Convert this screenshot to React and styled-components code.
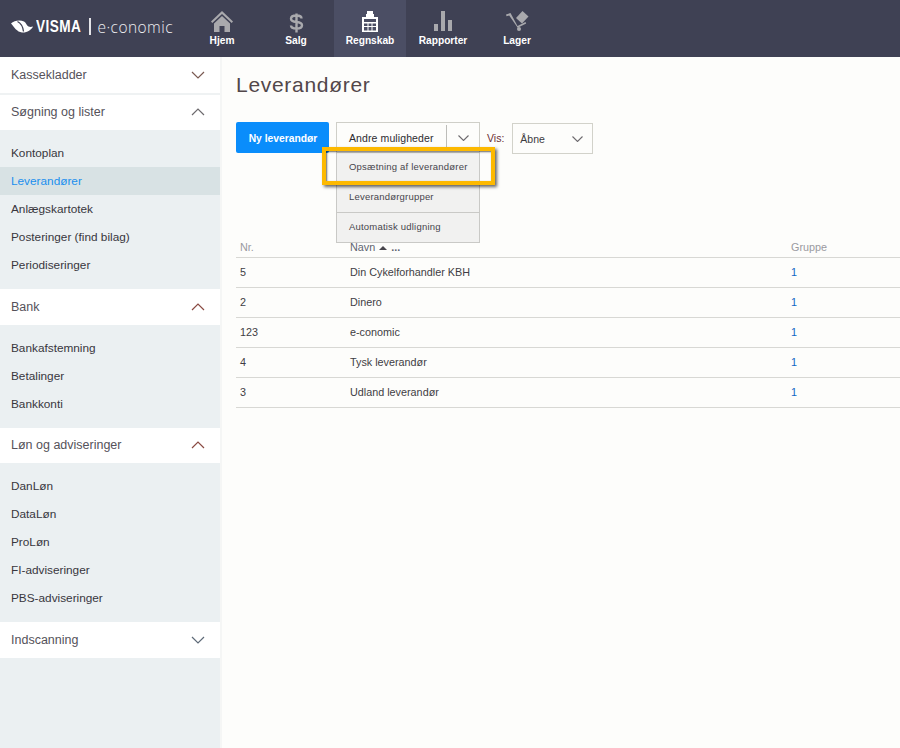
import React from "react";
import styled, { createGlobalStyle } from "styled-components";

const Global = createGlobalStyle`
  html, body { margin: 0; padding: 0; background: #fdfdfb; }
  body { font-family: "Liberation Sans", Arial, sans-serif; }
`;
const Page = styled.div`width: 900px; height: 748px; overflow: hidden; display: flex; flex-direction: column;`;
const Header = styled.header`height: 57px; flex: none; background: #3f4154; display: flex;`;
const Logo = styled.div`width: 186px; flex: none; display: flex; align-items: center; color: #fff; padding: 0 0 4px 11px; box-sizing: border-box;`;
const LogoMark = styled.span`
  display: block; width: 45px; flex: none; margin-left: 3px; white-space: nowrap;
  font-weight: 700; font-size: 16px; letter-spacing: .5px; line-height: 20px; transform: scaleX(.85); transform-origin: left;
`;
const LogoSwoosh = styled.svg`width: 22px; height: 13px; flex: none; display: block; fill: #fff;`;
const LogoBar = styled.span`width: 1.5px; height: 17px; background: #e4e4e8; margin: 0 7px 0 8px; flex: none;`;
const LogoText = styled.span`font-family: "Open Sans", sans-serif; font-size: 15.5px; font-weight: 300; letter-spacing: .45px; color: #f0f0f2; white-space: nowrap;`;
const Nav = styled.nav`display: flex;`;
const NavItem = styled.div`
  width: ${p => p.$w}px; display: flex; flex-direction: column; align-items: center;
  background: ${p => (p.$active ? "#4b4e64" : "transparent")};
  color: #fff; font-size: 10.2px; font-weight: 700; padding-top: 9px; box-sizing: border-box;
`;
const NavIcon = styled.svg`width: 24px; height: 24px; display: block; margin-bottom: 2px; flex: none;`;
const Body = styled.div`flex: 1; display: flex; min-height: 0;`;
const Sidebar = styled.aside`width: 220px; flex: none; background: #ebf0f2; border-right: 2px solid #f5f6f5;`;
const Section = styled.div`
  height: ${p => p.$h}px; background: #fff; display: flex; align-items: center; justify-content: space-between;
  padding: 0 15px ${p => p.$pb || 0}px 11px; font-size: 12.5px; color: #55525a; box-sizing: border-box;
  border-bottom: ${p => (p.$sep ? "2px solid #eff2f3" : "none")};
`;
const Chevron = styled.svg`width: 14px; height: 8px; display: block; flex: none; fill: none; stroke: ${p => p.$c || "#6d6a6e"}; stroke-width: 1.2;`;
const List = styled.ul`list-style: none; margin: 0; padding: 9px 0 10px;`;
const Item = styled.li`
  height: 28px; line-height: 28px; padding-left: 11px; font-size: 11.8px;
  color: ${p => (p.$active ? "#1a8fee" : "#38363d")};
  background: ${p => (p.$active ? "#d8e2e4" : "transparent")};
`;
const Main = styled.main`flex: 1; padding: 0 0 0 14px; min-width: 0;`;
const Title = styled.h1`margin: 15px 0 0 0; font-weight: 400; font-size: 21px; line-height: 26px; letter-spacing: .7px; color: #52474a;`;
const Toolbar = styled.div`display: flex; align-items: flex-start; margin-top: 24px; position: relative;`;
const Primary = styled.button`
  width: 93px; height: 31px; border: 0; border-radius: 2px; background: #0a8dfb; color: #fff; padding: 1px 0 0 1px;
  font: 700 10.3px "Liberation Sans", sans-serif; margin-right: 7px;
`;
const Split = styled.div`
  width: 144px; height: 31px; box-sizing: border-box; border: 1px solid #cfcfc8; background: #fdfdfb;
  display: flex; align-items: center; font-size: 10.5px; color: #2c2b30;
`;
const SplitLabel = styled.span`width: 110px; flex: none; box-sizing: border-box; padding: 1px 0 0 12px; border-right: 1px solid #bdbdb9; line-height: 25px; letter-spacing: .1px;`;
const SplitArrow = styled.span`flex: 1; display: flex; justify-content: center; padding-top: 1px;`;
const VisLabel = styled.span`font-size: 10.5px; color: #6c2f36; margin: 10px 8px 0 7px;`;
const Select = styled.div`
  width: 81px; height: 31px; margin-top: 1px; box-sizing: border-box; border: 1px solid #d2d2ca; display: flex;
  align-items: center; justify-content: space-between; padding: 0 9px 0 7px; font-size: 10.5px; color: #3c3b40;
`;
const Menu = styled.div`
  position: absolute; left: 100px; top: 31px; width: 144px; box-sizing: border-box; z-index: 2;
  background: #f1f1f0; border: 1px solid #c9c9c6; border-top: 0;
`;
const MenuItem = styled.div`
  height: ${p => (p.$last ? 29 : 30)}px; line-height: 28px; box-sizing: border-box; padding-left: 12px; font-size: 9.5px; color: #47454c; letter-spacing: .2px;
  border-bottom: ${p => (p.$last ? "none" : "1px solid #c9c9c6")};
`;
const Highlight = styled.div`
  position: absolute; left: 86px; top: 25px; width: 173px; height: 38px; box-sizing: border-box; z-index: 3;
  border: 4px solid #fdb900; box-shadow: 2px 2px 3px rgba(0,0,0,.6), inset 1px 1px 2px rgba(0,0,0,.6);
`;
const Table = styled.div`margin-top: 83px; font-size: 10.8px;`;
const Row = styled.div`
  display: grid; grid-template-columns: 110px 441px 1fr; height: ${p => (p.$head ? 21 : 30)}px; box-sizing: border-box;
  align-items: center; padding: 0 0 ${p => (p.$head ? 0 : 2)}px 4px; border-bottom: 1px solid #d8d8d4; color: #3f3d44;
`;
const HeadCell = styled.span`color: ${p => (p.$dark ? "#5e6470" : "#9a9a9f")};`;
const Group = styled.span`color: #1166c4;`;
const Dots = styled.b`font-weight: 700;`;
const SortUp = styled.span`
  display: inline-block; width: 0; height: 0; margin: 0 4px 1px 4px; vertical-align: middle;
  border-left: 4px solid transparent; border-right: 4px solid transparent; border-bottom: 4px solid #47454c;
`;

const Down = ({ c }) => <Chevron $c={c} viewBox="0 0 14 8"><path d="M1 1l6 6 6-6" /></Chevron>;
const Up = ({ c }) => <Chevron $c={c} viewBox="0 0 14 8"><path d="M1 7l6-6 6 6" /></Chevron>;
const Small = styled.svg`width: 11px; height: 6px; fill: none; stroke: #6d6a6e; stroke-width: 1.1; display: block;`;
const SmallDown = () => <Small viewBox="0 0 11 6"><path d="M.5.5l5 5 5-5" /></Small>;

const rows = [["5", "Din Cykelforhandler KBH"], ["2", "Dinero"], ["123", "e-conomic"], ["4", "Tysk leverandør"], ["3", "Udland leverandør"]];

export default function App() {
  return (
    <Page>
      <Global />
      <Header>
        <Logo>
          <LogoSwoosh viewBox="0 0 22 13">
            <path d="M0 3.500C3 .5 9-.5 13 1.500c2 1 2.500 4 4.500 5 1.500.7 3 .5 4.500 0-1.500 3.500-6.500 6.500-11 6C6 12 3 7 0 3.500z" />
            <path d="M6.500 1.500c3 1.500 5.500 5.500 6 10" stroke="#3f4154" strokeWidth="1.3" fill="none" />
          </LogoSwoosh>
          <LogoMark>VISMA</LogoMark><LogoBar /><LogoText>e·conomic</LogoText>
        </Logo>
        <Nav>
          <NavItem $w="72">
            <NavIcon viewBox="0 0 24 24" fill="#a9a9ad">
              <path d="M12 2 1 12.500l1.300 1.500L12 5l9.700 9 1.300-1.500z" />
              <path d="M4 14.500 12 7l8 7.500V23h-5.500v-6h-5v6H4z" />
            </NavIcon>Hjem
          </NavItem>
          <NavItem $w="76">
            <NavIcon viewBox="0 0 24 24" fill="none" stroke="#a9a9ad" strokeWidth="2.4">
              <path d="M17.500 9.500c0-2-2-3-5-3s-5.500 1-5.500 3.200 2.500 2.900 5.500 3.300 5.500 1 5.500 3.200-2.500 3.300-5.500 3.300-5.500-1-5.500-3M12.500 4.500v19" />
            </NavIcon>Salg
          </NavItem>
          <NavItem $w="72" $active>
            <NavIcon viewBox="0 0 24 24" fill="#fff">
              <path d="M9 2h6v3h1v3h4v15H4V8h4V5h1z" />
              <path d="M6 10h12v3H6zM6 14.500h3.500v2.500H6zM10.500 14.500h3v2.500h-3zM14.500 14.500H18v2.500h-3.500zM6 18h3.500v3.500H6zM10.500 18h3v3.500h-3zM14.500 18H18v3.500h-3.500z" fill="#4b4e64" />
            </NavIcon>Regnskab
          </NavItem>
          <NavItem $w="74">
            <NavIcon viewBox="0 0 24 24" fill="#a9a9ad"><path d="M3 15h4v7H3zM10 2h4v20h-4zM17 11h4v11h-4z" /></NavIcon>Rapporter
          </NavItem>
          <NavItem $w="74">
            <NavIcon viewBox="0 0 24 24" fill="#a9a9ad">
              <path d="m17.500 2 6 5.500-6.500 7-6-5.500z" />
              <path d="M1 5.500 5.500 4l7 13 8-4 .7 1.500-8.500 4.200L4.200 6.500 1.500 7.300z" />
              <circle cx="14" cy="20" r="2" />
            </NavIcon>Lager
          </NavItem>
        </Nav>
      </Header>
      <Body>
        <Sidebar>
          <Section $h={38} $sep>Kassekladder<Down c="#7a5a52" /></Section>
          <Section $h={35} $pb={2}>Søgning og lister<Up /></Section>
          <List>
            <Item>Kontoplan</Item>
            <Item $active>Leverandører</Item>
            <Item>Anlægskartotek</Item>
            <Item>Posteringer (find bilag)</Item>
            <Item>Periodiseringer</Item>
          </List>
          <Section $h={36}>Bank<Up c="#8a4a42" /></Section>
          <List>
            <Item>Bankafstemning</Item>
            <Item>Betalinger</Item>
            <Item>Bankkonti</Item>
          </List>
          <Section $h={35} $pb={2}>Løn og adviseringer<Up c="#8a4a42" /></Section>
          <List>
            <Item>DanLøn</Item>
            <Item>DataLøn</Item>
            <Item>ProLøn</Item>
            <Item>FI-adviseringer</Item>
            <Item>PBS-adviseringer</Item>
          </List>
          <Section $h={36}>Indscanning<Down c="#5e6a78" /></Section>
        </Sidebar>
        <Main>
          <Title>Leverandører</Title>
          <Toolbar>
            <Primary>Ny leverandør</Primary>
            <Split>
              <SplitLabel>Andre muligheder</SplitLabel>
              <SplitArrow><SmallDown /></SplitArrow>
            </Split>
            <VisLabel>Vis:</VisLabel>
            <Select>Åbne<SmallDown /></Select>
            <Menu>
              <MenuItem>Opsætning af leverandører</MenuItem>
              <MenuItem>Leverandørgrupper</MenuItem>
              <MenuItem $last>Automatisk udligning</MenuItem>
            </Menu>
            <Highlight />
          </Toolbar>
          <Table>
            <Row $head>
              <HeadCell>Nr.</HeadCell>
              <HeadCell $dark>Navn<SortUp /><Dots>...</Dots></HeadCell>
              <HeadCell>Gruppe</HeadCell>
            </Row>
            {rows.map(([n, name]) => (
              <Row key={n}><span>{n}</span><span>{name}</span><Group>1</Group></Row>
            ))}
          </Table>
        </Main>
      </Body>
    </Page>
  );
}
